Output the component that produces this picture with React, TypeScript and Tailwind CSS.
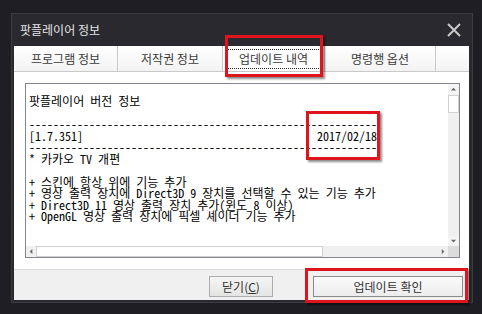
import React from 'react';

const dashes = '-'.repeat(58);

const lines: string[] = [
  '팟플레이어 버전 정보',
  '',
  dashes,
  '[1.7.351]' + ' '.repeat(39) + '2017/02/18',
  dashes,
  '* 카카오 TV 개편',
  '',
  '+ 스킨에 항상 위에 기능 추가',
  '+ 영상 출력 장치에 Direct3D 9 장치를 선택할 수 있는 기능 추가',
  '+ Direct3D 11 영상 출력 장치 추가(윈도 8 이상)',
  '+ OpenGL 영상 출력 장치에 픽셀 셰이더 기능 추가',
];

const tabs = [
  { label: '프로그램 정보', w: 'w-[104px]' },
  { label: '저작권 정보', w: 'w-[105px]' },
  { label: '업데이트 내역', w: 'w-[102px]', active: true },
  { label: '명령행 옵션', w: 'w-[111px]' },
];

const Arrow: React.FC<{ dir: 'up' | 'down' | 'left' | 'right' }> = ({ dir }) => {
  const pts = {
    up: '1,5 4,2 7,5',
    down: '1,2 4,5 7,2',
    left: '5,1 2,4 5,7',
    right: '2,1 5,4 2,7',
  }[dir];
  return (
    <svg width="7" height="7" viewBox="0 0 8 8">
      <polygon points={pts} fill="#6b6b6b" />
    </svg>
  );
};

const App: React.FC = () => {
  return (
    <div className="w-[482px] h-[314px] bg-[#1e1e24] pt-[13px] pl-[11px] relative overflow-hidden" style={{ fontFamily: '"Noto Sans CJK KR", "Liberation Sans", sans-serif' }}>
      {/* window */}
      <div className="w-[462px] h-[290px] bg-[#29292f] border border-[#3b3b42] flex flex-col pl-[2px] pr-[3px] pb-[2px]">
        {/* title bar */}
        <div className="h-[32px] flex items-center justify-between pl-[6px] pr-[8px]">
          <span className="text-[12px] text-[#e4e4e4] leading-none">팟플레이어 정보</span>
          <svg width="14" height="14" viewBox="0 0 14 14">
            <path d="M1 1 L13 13 M13 1 L1 13" stroke="#c9c9c9" strokeWidth="2" />
          </svg>
        </div>

        {/* body */}
        <div className="flex-1 bg-white flex flex-col">
          {/* tabs */}
          <div className="h-[26px] flex border-b border-[#c9c9c9] bg-gradient-to-b from-white to-[#f3f3f3]">
            {tabs.map((t) => (
              <div
                key={t.label}
                className={`${t.w} h-full flex items-center justify-center border-r border-[#c9c9c9] text-[12px] text-[#3a3a3a] ${t.active ? 'bg-white' : ''}`}
              >
                {t.active ? (
                  <span className="border border-dotted border-[#222] px-[12px] py-[2px] leading-[14px]">{t.label}</span>
                ) : (
                  <span className="leading-[14px]">{t.label}</span>
                )}
              </div>
            ))}
          </div>

          {/* content */}
          <div className="h-[197px] pl-[11px] pt-[11px]">
            <div className="w-[435px] h-[175px] border border-[#828790] flex flex-col">
              <div className="flex flex-1">
                <div className="flex-1 pl-[3px] pt-[11px] overflow-hidden">
                  <pre
                    className="text-[12px] leading-[11.5px] text-black whitespace-pre m-0"
                    style={{ fontFamily: '"Noto Sans Mono CJK KR", "Noto Sans CJK KR", "DejaVu Sans Mono", monospace' }}
                  >
                    {lines.join('\n')}
                  </pre>
                </div>
                {/* vertical scrollbar */}
                <div className="w-[11px] bg-[#f0f0f0] flex flex-col">
                  <div className="h-[10px] flex items-center justify-center bg-[#f4f4f4]">
                    <Arrow dir="up" />
                  </div>
                  <div className="h-[18px] mt-[1px] bg-white border border-[#d2d2d2]" />
                  <div className="flex-1" />
                  <div className="h-[10px] flex items-center justify-center bg-[#f4f4f4]">
                    <Arrow dir="down" />
                  </div>
                </div>
              </div>
              {/* horizontal scrollbar */}
              <div className="h-[11px] flex bg-[#f0f0f0]">
                <div className="w-[10px] flex items-center justify-center">
                  <Arrow dir="left" />
                </div>
                <div className="w-[287px] bg-white border border-[#d2d2d2]" />
                <div className="flex-1" />
                <div className="w-[10px] flex items-center justify-center">
                  <Arrow dir="right" />
                </div>
                <div className="w-[11px] bg-[#dcdcdc]" />
              </div>
            </div>
          </div>

          {/* bottom button bar */}
          <div className="flex-1 bg-[#f0f0f0] border-t border-[#dadada] flex items-start justify-end pt-[6px] pr-[6px]">
            <button className="w-[64px] h-[21px] border border-[#adadad] bg-gradient-to-b from-[#f6f6f6] to-[#e4e4e4] text-[12px] text-[#333] leading-none flex items-center justify-center">
              닫기(<span className="underline">C</span>)
            </button>
            <button className="ml-[40px] w-[150px] h-[21px] border border-[#8a8a8a] bg-gradient-to-b from-[#fbfbfb] to-[#ececec] text-[12px] text-[#333] leading-none flex items-center justify-center">
              업데이트 확인
            </button>
          </div>
        </div>
      </div>

      {/* red highlight boxes */}
      <div className="absolute left-[225px] top-[35px] w-[98px] h-[42px] border-[3px] border-[#e0141c] shadow-[2px_2px_2px_rgba(0,0,0,0.45)]" />
      <div className="absolute left-[306px] top-[111px] w-[74px] h-[49px] border-[3px] border-[#e0141c] shadow-[2px_2px_2px_rgba(0,0,0,0.45)]" />
      <div className="absolute left-[305px] top-[268px] w-[163px] h-[35px] border-[3px] border-[#e0141c] shadow-[2px_2px_2px_rgba(0,0,0,0.45)]" />
    </div>
  );
};

export default App;
